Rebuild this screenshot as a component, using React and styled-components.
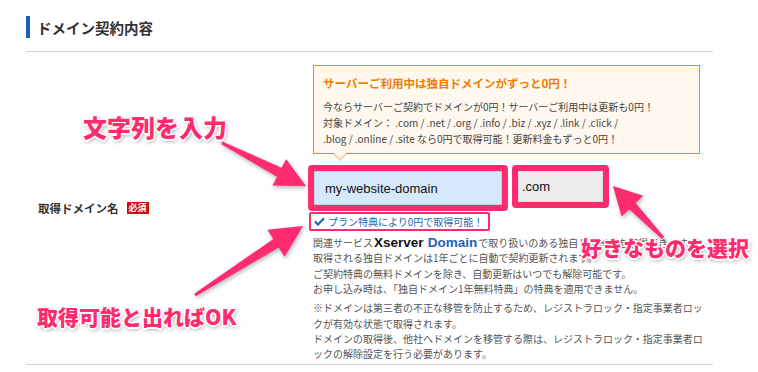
import styled, { createGlobalStyle } from 'styled-components'

const GlobalStyle = createGlobalStyle`
  html, body { margin: 0; padding: 0; background: #fff; }
  body { font-family: "Noto Sans CJK JP", "Noto Sans", sans-serif; color: #333; }
`

const PINK = '#fe2c6e'

const Page = styled.div`
  position: relative;
  width: 758px;
  height: 372px;
  overflow: hidden;
  padding: 16px 45px 0 26px;
  box-sizing: border-box;
`

const Heading = styled.h2`
  display: flex;
  align-items: center;
  gap: 7px;
  margin: 0;
  height: 22px;
  font-size: 14.5px;
  font-weight: 700;
  color: #333;

  &::before {
    content: '';
    width: 4px;
    height: 22px;
    background: #1a5fb4;
  }
`

const Rule = styled.hr`
  margin: ${p => p.$top || 0}px 0 0;
  border: 0;
  border-top: 1px solid #d4d4d4;
`

const Row = styled.div`
  display: flex;
`

const LabelCell = styled.div`
  width: 282px;
  padding-left: 12px;
  box-sizing: border-box;
  display: flex;
  align-items: center;
  gap: 8px;
  font-size: 11.5px;
  font-weight: 700;
  color: #333;
`

const Badge = styled.span`
  display: inline-block;
  height: 12px;
  line-height: 12px;
  padding: 0 2px;
  background: #cc0f16;
  color: #fff;
  font-size: 9px;
  font-weight: 700;
`

const Content = styled.div`
  flex: 1;
  padding: 13px 0 2px;
`

const Notice = styled.div`
  position: relative;
  margin-left: 5px;
  width: 387px;
  box-sizing: border-box;
  border: 1px solid #f3861f;
  background: #fff8ee;
  padding: 9px 8px 6px 9px;

  &::before,
  &::after {
    content: '';
    position: absolute;
    left: 19px;
    width: 0;
    height: 0;
    border-left: 7px solid transparent;
    border-right: 7px solid transparent;
  }
  &::before {
    bottom: -8px;
    border-top: 7px solid #f9c796;
  }
  &::after {
    bottom: -6px;
    left: 20px;
    border-left-width: 6px;
    border-right-width: 6px;
    border-top: 6px solid #fff8ee;
  }
`

const NoticeTitle = styled.div`
  font-size: 11.5px;
  line-height: 16px;
  font-weight: 700;
  color: #f07d00;
`

const NoticeBody = styled.div`
  margin-top: 8px;
  font-size: 10px;
  line-height: 16px;
  color: #444;
  white-space: nowrap;
`

const Controls = styled.div`
  display: flex;
  align-items: flex-start;
  gap: 4px;
  margin-top: 11px;
`

const Highlight = styled.div`
  border: ${p => p.$thin ? 2 : 6}px solid ${PINK};
  border-radius: ${p => p.$thin ? 2 : 4}px;
`

const DomainInput = styled.div`
  width: 188px;
  height: 34px;
  box-sizing: border-box;
  display: flex;
  align-items: center;
  padding-left: 10px;
  background: #d6e9fc;
  border: 1px solid #b9d3ee;
  font-family: "Liberation Sans", Arial, sans-serif;
  font-size: 13px;
  color: #111;
`

const TldSelect = styled.div`
  width: 85px;
  height: 31px;
  box-sizing: border-box;
  display: flex;
  align-items: center;
  padding-left: 3px;
  background: #ececec;
  border: 1px solid #dadada;
  font-family: "Liberation Sans", Arial, sans-serif;
  font-size: 13px;
  color: #111;
`

const Available = styled(Highlight)`
  display: flex;
  align-items: center;
  gap: 3px;
  width: 181px;
  height: 19px;
  box-sizing: border-box;
  margin: 1px 0 0 1px;
  padding-left: 3px;
  font-size: 10px;
  color: #2467b3;
`

const Desc = styled.div`
  margin-top: 4px;
  padding-left: 5px;
  font-size: 10px;
  line-height: 15.4px;
  color: #555;
  white-space: nowrap;

  p { margin: 0; }
  p + p { margin-top: 3.6px; }
`

const Logo = styled.span`
  font-family: "Liberation Sans", Arial, sans-serif;
  font-size: 13.5px;
  font-weight: 700;
  line-height: 0;
  margin: 0 1px;
  color: ${p => p.$blue ? '#1c63b6' : '#111'};
`

const Overlay = styled.svg`
  position: absolute;
  left: 0;
  top: 0;
  width: 758px;
  height: 372px;
  pointer-events: none;
  filter: drop-shadow(1px 2px 2px rgba(0, 0, 0, 0.3));
`

const Callout = styled.div`
  position: absolute;
  left: ${p => p.$x}px;
  top: ${p => p.$y}px;
  font-size: ${p => p.$size}px;
  line-height: 1;
  font-weight: 900;
  white-space: nowrap;
  color: ${PINK};
  text-shadow:
    1.5px 0 #fff, -1.5px 0 #fff, 0 1.5px #fff, 0 -1.5px #fff,
    1px 1px #fff, -1px -1px #fff, 1px -1px #fff, -1px 1px #fff,
    1px 2px 4px rgba(0, 0, 0, 0.45);
`

const arrows = [
  '222.7,141.7 281.6,167.8 286.1,158.9 306,186 272.5,185.6 277,176.8 221.3,144.3',
  '194.2,293.7 273.3,239 267.4,229.7 303,226 284.6,256.7 278.7,247.4 195.8,296.3',
  '661.9,239 629.2,209.3 621.6,216.6 613,186 643.2,195.8 635.6,203.1 664.1,237',
]

export default function App() {
  return (
    <Page>
      <GlobalStyle />
      <Heading>ドメイン契約内容</Heading>
      <Rule $top={13} />
      <Row>
        <LabelCell>
          取得ドメイン名
          <Badge>必須</Badge>
        </LabelCell>
        <Content>
          <Notice>
            <NoticeTitle>サーバーご利用中は独自ドメインがずっと0円！</NoticeTitle>
            <NoticeBody>
              今ならサーバーご契約でドメインが0円！サーバーご利用中は更新も0円！<br />
              対象ドメイン： .com / .net / .org / .info / .biz / .xyz / .link / .click /<br />
              .blog / .online / .site なら0円で取得可能！更新料金もずっと0円！
            </NoticeBody>
          </Notice>
          <Controls>
            <Highlight>
              <DomainInput>my-website-domain</DomainInput>
            </Highlight>
            <Highlight>
              <TldSelect>.com</TldSelect>
            </Highlight>
          </Controls>
          <Available $thin>
            <svg width="11" height="9" viewBox="0 0 11 9">
              <path d="M1 4.6 L4 7.5 L10 1.2" fill="none" stroke="#2467b3" strokeWidth="2.2" />
            </svg>
            プラン特典により0円で取得可能！
          </Available>
          <Desc>
            <p>
              関連サービス<Logo>Xserver</Logo> <Logo $blue>Domain</Logo>で取り扱いのある独自ドメインを取得できます。<br />
              取得される独自ドメインは1年ごとに自動で契約更新されます。<br />
              ご契約特典の無料ドメインを除き、自動更新はいつでも解除可能です。<br />
              お申し込み時は、「独自ドメイン1年無料特典」の特典を適用できません。
            </p>
            <p>
              ※ドメインは第三者の不正な移管を防止するため、レジストラロック・指定事業者ロッ<br />
              クが有効な状態で取得されます。<br />
              ドメインの取得後、他社へドメインを移管する際は、レジストラロック・指定事業者ロ<br />
              ックの解除設定を行う必要があります。
            </p>
          </Desc>
        </Content>
      </Row>
      <Rule />
      <Overlay viewBox="0 0 758 372">
        {arrows.map(points => (
          <polygon key={points} points={points} fill={PINK} />
        ))}
      </Overlay>
      <Callout $x={83} $y={115} $size={24}>文字列を入力</Callout>
      <Callout $x={581} $y={237} $size={21}>好きなものを選択</Callout>
      <Callout $x={37} $y={306} $size={21}>取得可能と出ればOK</Callout>
    </Page>
  )
}
